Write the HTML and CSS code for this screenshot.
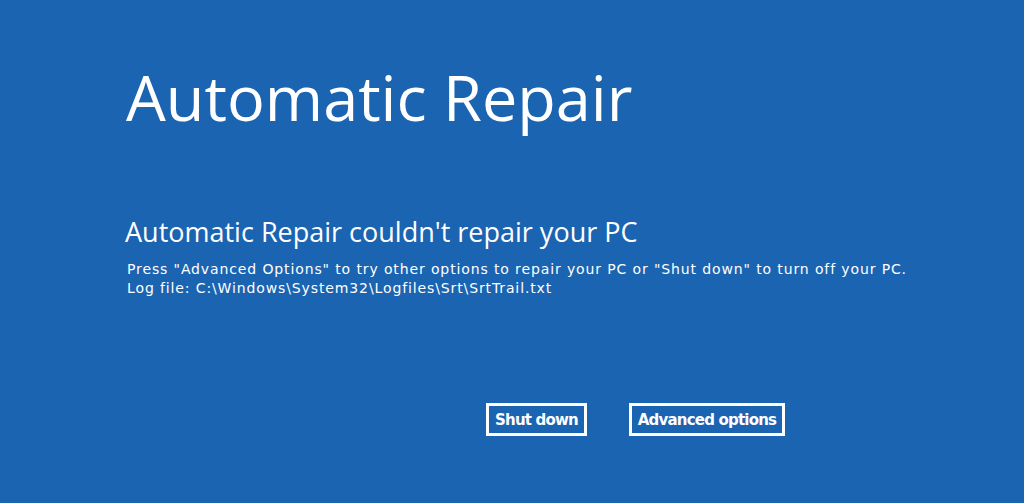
FILE: index.html
```html
<!DOCTYPE html>
<html>
<head>
  <title>Automatic Repair</title>
  <meta charset="UTF-8">
  <link rel="stylesheet" href="styles.css">
</head>
<body>
  <div class="screen">
    <h1 class="title">Automatic Repair</h1>
    <h2 class="subtitle">Automatic Repair couldn't repair your PC</h2>
    <p class="message">Press "Advanced Options" to try other options to repair your PC or "Shut down" to turn off your PC.<br>Log file: C:\Windows\System32\Logfiles\Srt\SrtTrail.txt</p>
    <div class="actions">
      <button class="btn btn-shutdown">Shut down</button>
      <button class="btn btn-advanced">Advanced options</button>
    </div>
  </div>
</body>
</html>
```

FILE: styles.css
```css
html, body {
  margin: 0;
  height: 100%;
  background: #1b64b2;
}
body {
  color: #fff;
  font-family: "Open Sans", sans-serif;
  overflow: hidden;
}
.screen {
  padding: 57px 0 0 126px;
}
.title {
  margin: 0;
  font-size: 63px;
  font-weight: 400;
  line-height: 80px;
}
.subtitle {
  margin: 78px 0 0 -1px;
  font-size: 27px;
  font-weight: 400;
  line-height: 34px;
}
.message {
  margin: 11px 0 0 1px;
  font-family: "DejaVu Sans", sans-serif;
  font-size: 14px;
  letter-spacing: 0.88px;
  line-height: 19px;
}
.actions {
  display: flex;
  gap: 42px;
  margin: 105px 0 0 360px;
}
.btn {
  height: 33px;
  padding: 0;
  background: transparent;
  border: 3px solid #fff;
  color: #fff;
  font-family: "DejaVu Sans", sans-serif;
  font-size: 15px;
  font-weight: bold;
  letter-spacing: -0.8px;
  white-space: nowrap;
}
.btn-shutdown {
  width: 101px;
}
.btn-advanced {
  width: 156px;
}
```
